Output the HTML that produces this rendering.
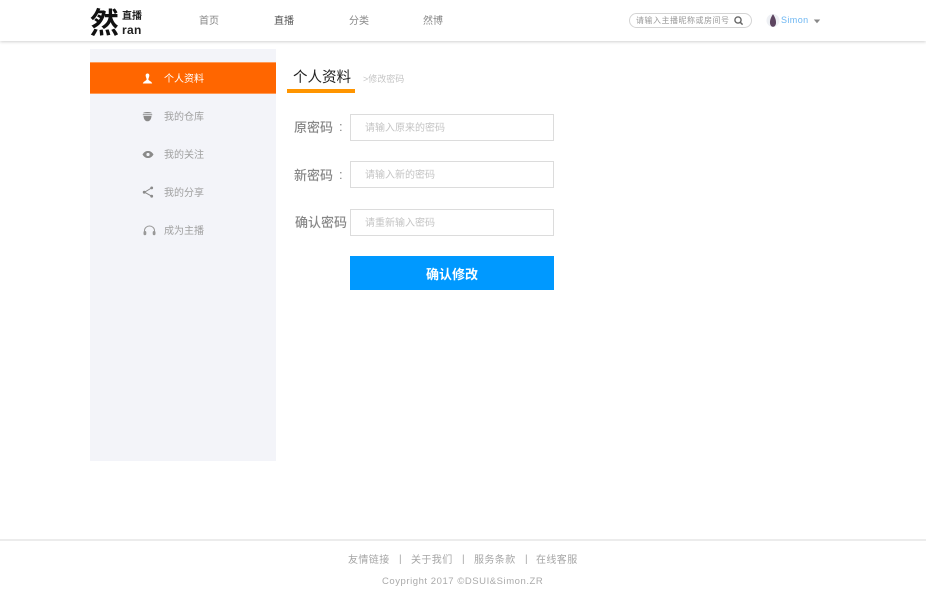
<!DOCTYPE html>
<html lang="zh"><head><meta charset="utf-8"><title>修改密码</title>
<style>
*{margin:0;padding:0;box-sizing:border-box}
html,body{width:926px;height:600px;background:#fff;overflow:hidden}
body{position:relative;font-family:"Liberation Sans","Noto Sans CJK SC",sans-serif}
.a{position:absolute;white-space:nowrap;line-height:1}
.hdr{position:absolute;left:0;top:0;width:926px;height:41px;background:#fff;box-shadow:0 1px 3px rgba(0,0,0,.18)}
.side{position:absolute;left:90px;top:49px;width:186px;height:412px;background:#f3f4f9}
.act{position:absolute;left:90px;top:62px;width:186px;height:32px;background:#ff6600;border-top:1px solid #ff9a55;border-bottom:1px solid #ff9a55}
.inp{position:absolute;left:350px;width:204px;height:27px;border:1px solid #dcdcdc;background:#fff;font-size:10px;color:#c4c4c4;padding-left:14px;line-height:27px;white-space:nowrap}
.lb{font-size:13px;color:#888;font-weight:500}
.m{font-size:10px;color:#a0a0a0}
svg{position:absolute}
</style></head><body>
<div class="hdr"></div>
<div class="a" style="left:90px;top:10px;font-size:29px;font-weight:700;color:#111">然</div>
<div class="a" style="left:122px;top:12px;font-size:10px;font-weight:700;color:#222">直播</div>
<div class="a" style="left:122px;top:24px;font-size:12px;font-weight:700;color:#222;letter-spacing:.3px">ran</div>
<div class="a m" style="left:199px;top:17px;color:#888">首页</div>
<div class="a m" style="left:274px;top:17px;color:#555">直播</div>
<div class="a m" style="left:349px;top:17px;color:#888">分类</div>
<div class="a m" style="left:423px;top:17px;color:#888">然博</div>
<div style="position:absolute;left:629px;top:13px;width:123px;height:15px;border:1px solid #d4d4d4;border-radius:8px;background:#fff"></div>
<div class="a" style="left:636px;top:17px;font-size:8px;color:#999;letter-spacing:.5px">请输入主播昵称或房间号</div>
<svg style="left:733px;top:15px" width="11" height="11" viewBox="0 0 11 11"><circle cx="5" cy="5" r="3.1" fill="none" stroke="#666" stroke-width="1.4"/><path d="M7.300 7.300L9.600 9.600" stroke="#666" stroke-width="1.5"/></svg>
<svg style="left:766px;top:13px" width="14" height="15" viewBox="0 0 14 15"><circle cx="7" cy="7.500" r="6.500" fill="#eef0f4"/><path d="M7 1.200C5 4 3.800 7 4 10c.1 2 1.200 3.800 3 3.800s2.900-1.800 3-3.800C10.200 7 9 4 7 1.200z" fill="#5d4560"/></svg>
<div class="a" style="left:781px;top:16px;font-size:9px;color:#6db6f2;letter-spacing:.4px">Simon</div>
<svg style="left:813px;top:19px" width="8" height="5" viewBox="0 0 8 5"><path d="M.8.500H7.200L4 4.300z" fill="#888"/></svg>

<div class="side"></div>
<div class="act"></div>
<svg style="left:142px;top:73px" width="11" height="11" viewBox="0 0 11 11"><path d="M5.500.5C4 .5 3.500 1.700 3.700 3c.2 1.300.8 2.300 1 3.200C4.500 7.800 1.500 8 .8 10.500H10.200C9.500 8 6.500 7.800 6.300 6.200c.2-.9.800-1.900 1-3.200C7.500 1.700 7 .5 5.500.5z" fill="#fff"/></svg>
<div class="a m" style="left:164px;top:75px;color:#fff">个人资料</div>
<svg style="left:142px;top:111px" width="11" height="11" viewBox="0 0 11 11"><path d="M1 2.200C2 .6 9 .6 10 2.200z M.8 3.200H10.200V4.200H.8z M1.500 5H9.500C9.300 8 8 10.300 5.500 10.300S1.700 8 1.500 5z" fill="#8a8a8a"/></svg>
<div class="a m" style="left:164px;top:113px">我的仓库</div>
<svg style="left:142px;top:150px" width="12" height="9" viewBox="0 0 12 9"><path d="M.5 4.500C2 1.800 4 1 6 1s4 .8 5.500 3.500C10 7.200 8 8 6 8S2 7.200.5 4.500z" fill="#8a8a8a"/><circle cx="6" cy="4.500" r="1.600" fill="#f3f4f9"/></svg>
<div class="a m" style="left:164px;top:151px">我的关注</div>
<svg style="left:142px;top:186px" width="12" height="12" viewBox="0 0 12 12"><path d="M9.500 2L2.500 6.200l7 3.900" fill="none" stroke="#8a8a8a" stroke-width="1"/><circle cx="9.700" cy="1.900" r="1.400" fill="#8a8a8a"/><circle cx="2.200" cy="6.200" r="1.400" fill="#8a8a8a"/><circle cx="9.700" cy="10.200" r="1.400" fill="#8a8a8a"/></svg>
<div class="a m" style="left:164px;top:189px">我的分享</div>
<svg style="left:143px;top:225px" width="13" height="11" viewBox="0 0 13 11"><path d="M1.500 7V5.500a5 4.500 0 0 1 10 0V7" fill="none" stroke="#999" stroke-width="1"/><rect x=".5" y="6" width="2.800" height="4.200" rx="1.200" fill="#999"/><rect x="9.700" y="6" width="2.800" height="4.200" rx="1.200" fill="#999"/></svg>
<div class="a m" style="left:164px;top:227px">成为主播</div>

<div class="a" style="left:293px;top:71px;font-size:14.500px;color:#222">个人资料</div>
<div style="position:absolute;left:287px;top:89px;width:68px;height:4px;background:#ff9500"></div>
<div class="a" style="left:363px;top:75px;font-size:9px;color:#c4c4c4">&gt;修改密码</div>

<div class="a lb" style="left:294px;top:121px">原密码</div><div class="a lb" style="left:339px;top:120px">:</div>
<div class="inp" style="top:114px">请输入原来的密码</div>
<div class="a lb" style="left:294px;top:169px">新密码</div><div class="a lb" style="left:339px;top:168px">:</div>
<div class="inp" style="top:161px;line-height:28px">请输入新的密码</div>
<div class="a lb" style="left:295px;top:216px">确认密码</div>
<div class="inp" style="top:209px">请重新输入密码</div>
<div class="a" style="left:350px;top:256px;width:204px;height:34px;background:#0099ff;color:#fff;font-size:13px;font-weight:700;text-align:center;line-height:37px">确认修改</div>

<div style="position:absolute;left:0;top:539px;width:926px;height:2px;background:#ececec"></div>
<div class="a" style="left:348px;top:556px;font-size:10px;color:#a5a5a5;letter-spacing:.4px">友情链接</div>
<div class="a" style="left:399px;top:555px;font-size:10px;color:#a5a5a5">|</div>
<div class="a" style="left:411px;top:556px;font-size:10px;color:#a5a5a5;letter-spacing:.4px">关于我们</div>
<div class="a" style="left:462px;top:555px;font-size:10px;color:#a5a5a5">|</div>
<div class="a" style="left:474px;top:556px;font-size:10px;color:#a5a5a5;letter-spacing:.4px">服务条款</div>
<div class="a" style="left:525px;top:555px;font-size:10px;color:#a5a5a5">|</div>
<div class="a" style="left:536px;top:556px;font-size:10px;color:#a5a5a5;letter-spacing:.4px">在线客服</div>
<div class="a" style="left:382px;top:577px;font-size:9.500px;color:#aaa;letter-spacing:.55px">Coypright 2017 ©DSUI&amp;Simon.ZR</div>
</body></html>
